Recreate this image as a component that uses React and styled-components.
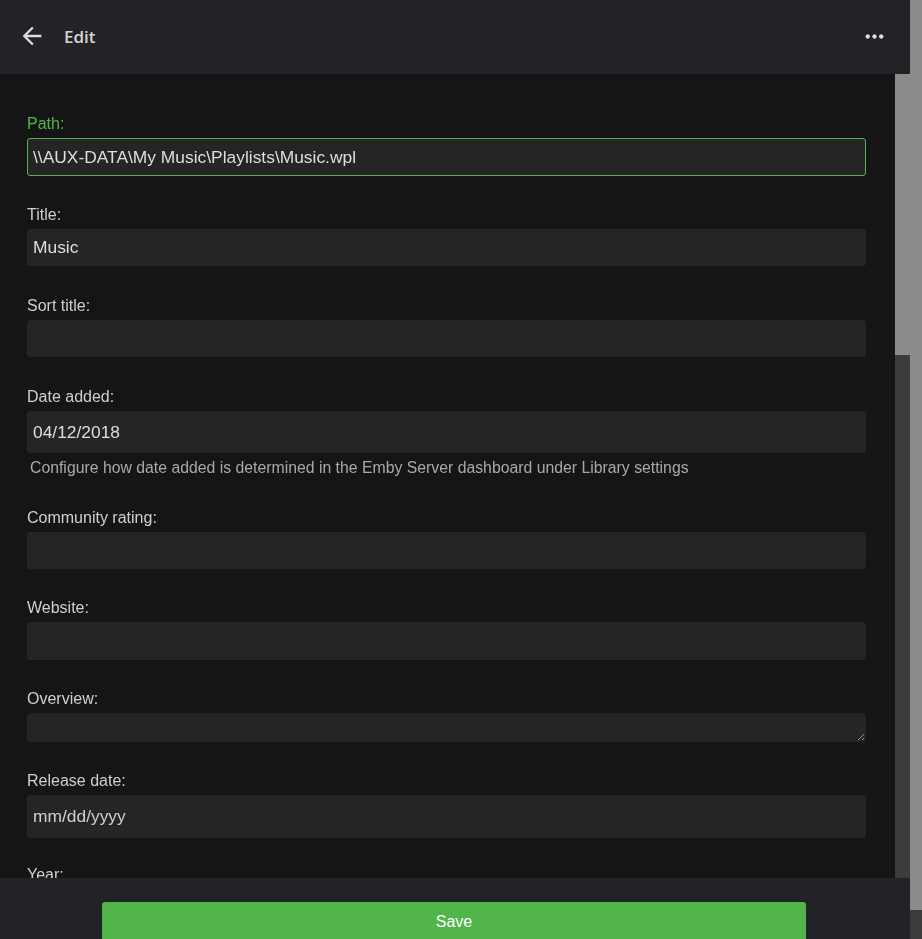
import React from 'react';
import styled, { createGlobalStyle } from 'styled-components';
import { MdArrowBack, MdMoreHoriz } from 'react-icons/md';

const GlobalStyle = createGlobalStyle`
  html, body {
    margin: 0;
    padding: 0;
    height: 100%;
    overflow: hidden;
    background: #151515;
  }
  * {
    box-sizing: border-box;
  }
`;

// the page is 30px taller than the window, so the footer runs past the bottom edge
const Shell = styled.div`
  display: flex;
  height: calc(100vh + 30px);
  overflow: hidden;
  font-family: "Liberation Sans", Arial, sans-serif;
`;

const Main = styled.div`
  flex: 1;
  display: flex;
  flex-direction: column;
  min-width: 0;
`;

const Scrollbar = styled.div`
  width: ${({ $width }) => $width}px;
  flex-shrink: 0;
  display: flex;
  flex-direction: column;
  background: #3b3b3b;
`;

const Thumb = styled.div`
  flex-shrink: 0;
  background: #8b8b8b;
`;

const Header = styled.header`
  height: 74px;
  flex-shrink: 0;
  display: flex;
  align-items: center;
  padding: 0 22px 2px 18px;
  background: #222327;
  color: #dcdcdc;
`;

const IconButton = styled.button`
  display: flex;
  align-items: center;
  justify-content: center;
  padding: 0;
  border: none;
  background: none;
  color: #dcdcdc;
  cursor: pointer;
`;

const Title = styled.h1`
  margin: 0 0 0 18px;
  font-family: "Open Sans", "Noto Sans", sans-serif;
  font-size: 17px;
  font-weight: 600;
  color: #d6d6d6;
  flex: 1;
`;

const Body = styled.div`
  flex: 1;
  min-height: 0;
  display: flex;
`;

const FormArea = styled.div`
  flex: 1;
  overflow: hidden;
  padding: 40px 29px 0 27px;
  background: #151515;
`;

const Field = styled.div`
  margin-bottom: ${({ $gap }) => $gap ?? 30}px;
`;

const Label = styled.label`
  display: block;
  font-size: 16px;
  line-height: 19px;
  margin-bottom: 5px;
  color: ${({ $active }) => ($active ? '#52b54b' : '#cfcfcf')};
`;

const Input = styled.input`
  display: block;
  width: 100%;
  height: ${({ $h }) => $h ?? 37}px;
  margin: 0;
  padding: 0 5px;
  font-family: "Liberation Sans", Arial, sans-serif;
  font-size: 17.4px;
  color: #dedede;
  background: #252525;
  border: 1px solid ${({ $active }) => ($active ? '#52b54b' : '#252525')};
  border-radius: 3px;
  outline: none;

  &::placeholder {
    color: #cfcfcf;
    opacity: 1;
  }
`;

const TextArea = styled.textarea`
  display: block;
  width: 100%;
  height: 29px;
  margin: 0;
  padding: 4px 5px;
  font-family: "Liberation Sans", Arial, sans-serif;
  font-size: 17.4px;
  color: #dedede;
  background: #252525;
  border: 1px solid #252525;
  border-radius: 3px;
  outline: none;
  color-scheme: dark;
  resize: vertical;
`;

const Help = styled.div`
  margin: 6px 0 0 3px;
  font-size: 15.8px;
  line-height: 18px;
  color: #a9a9a9;
`;

const Footer = styled.footer`
  flex-shrink: 0;
  height: 91px;
  display: flex;
  justify-content: center;
  padding: 24px 0 0;
  background: #222327;
`;

const SaveButton = styled.button`
  width: 704px;
  height: 40px;
  margin-left: -2px;
  border: none;
  border-radius: 3px;
  background: #52b54b;
  color: #ffffff;
  font-family: "Liberation Sans", Arial, sans-serif;
  font-size: 16px;
  padding: 0 0 1px;
  cursor: pointer;
`;

const fields = [
  { label: 'Path:', value: '\\\\AUX-DATA\\My Music\\Playlists\\Music.wpl', active: true, h: 38, gap: 29 },
  { label: 'Title:', value: 'Music' },
  { label: 'Sort title:', value: '' },
  {
    label: 'Date added:',
    value: '04/12/2018',
    h: 42,
    gap: 31,
    help: 'Configure how date added is determined in the Emby Server dashboard under Library settings',
  },
  { label: 'Community rating:', value: '', gap: 29 },
  { label: 'Website:', value: '', h: 38, gap: 29 },
  { label: 'Overview:', textarea: true, gap: 29 },
  { label: 'Release date:', value: '', placeholder: 'mm/dd/yyyy', h: 43, gap: 27 },
  { label: 'Year:', value: '' },
  { label: 'Parental rating:', value: '' },
  { label: 'Genres:', value: '' },
];

export default function App() {
  return (
    <>
      <GlobalStyle />
      <Shell>
        <Main>
          <Header>
            <IconButton aria-label="Back">
              <MdArrowBack size={28} />
            </IconButton>
            <Title>Edit</Title>
            <IconButton aria-label="More">
              <MdMoreHoriz size={27} />
            </IconButton>
          </Header>
          <Body>
            <FormArea>
              {fields.map((f) => (
                <Field key={f.label} $gap={f.gap}>
                  <Label $active={f.active}>{f.label}</Label>
                  {f.textarea ? (
                    <TextArea rows={1} />
                  ) : (
                    <Input
                      $active={f.active}
                      $h={f.h}
                      defaultValue={f.value}
                      placeholder={f.placeholder}
                    />
                  )}
                  {f.help && <Help>{f.help}</Help>}
                </Field>
              ))}
            </FormArea>
            <Scrollbar $width={15}>
              <Thumb style={{ height: 281 }} />
            </Scrollbar>
          </Body>
          <Footer>
            <SaveButton>Save</SaveButton>
          </Footer>
        </Main>
        <Scrollbar $width={12}>
          <Thumb style={{ height: 910 }} />
        </Scrollbar>
      </Shell>
    </>
  );
}
